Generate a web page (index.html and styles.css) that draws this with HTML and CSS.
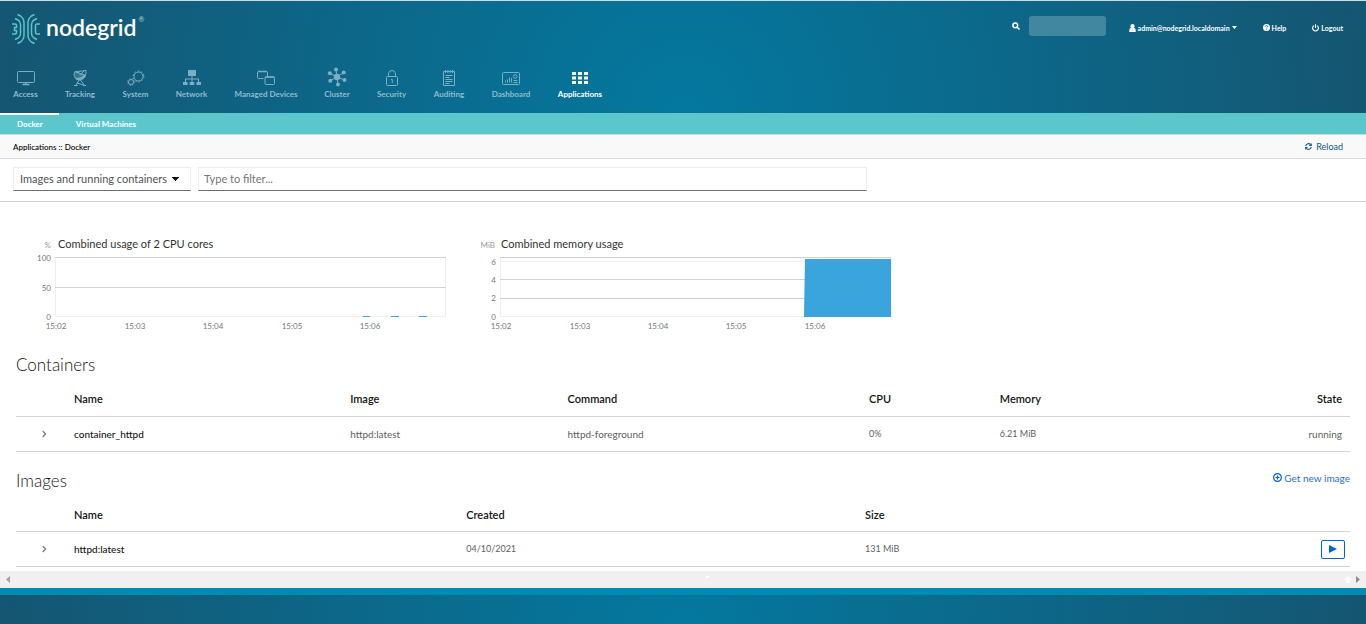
FILE: index.html
```html
<!DOCTYPE html>
<html lang="en">
<head>
<meta charset="utf-8">
<title>Nodegrid - Applications :: Docker</title>
<link rel="stylesheet" href="styles.css">
</head>
<body>
<header class="header">
  <div class="topbar">
    <a class="logo" href="#" aria-label="nodegrid">
      <svg class="logo-mark" width="28" height="32" viewBox="0 0 28 32" fill="none" stroke="#5bc5c9" stroke-width="1.500">
        <path d="M5.500 1.500 8.500 3Q12 5.500 12 10v12q0 4.500-3.500 7l-3 1.500M3 5.500 6 7q2.500 1.500 2.500 4.500v9q0 3-2.500 4.500l-3 1.500M0 11h3q1.500 0 1.500 1.500v2H2.500v3h2v2Q4.500 21 3 21H0"/>
        <path d="M22.500 1.500 19.500 3Q16 5.500 16 10v12q0 4.500 3.500 7l3 1.500M25 5.500 22 7q-2.500 1.500-2.500 4.500v9q0 3 2.500 4.500l3 1.500M28 11h-3q-1.500 0-1.500 1.500v7q0 1.500 1.500 1.500h3"/>
      </svg>
      <span class="logo-text">nodegrid</span><span class="logo-mark-r">®</span>
    </a>
    <div class="tools">
      <label class="search">
        <svg width="8" height="8" viewBox="0 0 8 8" fill="none" stroke="#fff" stroke-width="1.500" role="img" aria-label="Search"><circle cx="3.300" cy="3.300" r="2.400"/><path d="m5 5 2.500 2.500"/></svg>
        <input class="search-box" type="text">
      </label>
      <button class="tool user" type="button">
        <svg width="7" height="8" viewBox="0 0 7 8" fill="#fff"><circle cx="3.500" cy="2.200" r="2.100"/><path d="M.3 8V6q0-2 1.700-2h3q1.700 0 1.700 2v2z"/></svg>
        admin@nodegrid.localdomain
        <svg width="5" height="3" viewBox="0 0 5 3" fill="#fff"><path d="M0 0h5L2.500 3z"/></svg>
      </button>
      <a class="tool help" href="#">
        <svg width="7" height="7" viewBox="0 0 7 7"><circle cx="3.500" cy="3.500" r="3.500" fill="#fff"/><path d="M2.300 2.600q.2-1 1.200-1t1.200.9q0 .6-1.200 1.300M3.500 4.800v.9" fill="none" stroke="#11607f" stroke-width=".9"/></svg>
        Help
      </a>
      <a class="tool" href="#">
        <svg width="7" height="8" viewBox="0 0 7 8" fill="none" stroke="#fff" stroke-width="1.100"><path d="M2 1.600a2.900 2.900 0 1 0 3 0M3.500.3V4"/></svg>
        Logout
      </a>
    </div>
  </div>
  <nav class="mainnav">
    <a class="nav-item" href="#">
      <svg width="18" height="18" viewBox="0 0 18 18" fill="none" stroke="currentColor"><rect x=".5" y="2.500" width="17" height="11" rx="1"/><path d="M9 13.500v2M5.500 15.500h7" stroke-width="1.500"/></svg>
      Access</a>
    <a class="nav-item" href="#">
      <svg width="18" height="18" viewBox="0 0 18 18" fill="none" stroke="currentColor"><path d="M4 2.500C2 6 3.500 10.500 8 11q5 0 6.500-4.500z" fill="currentColor" fill-opacity=".35"/><path d="M4 2.500 14.500 6.500M4 2.500l9-.5M13 2 9 6.500M12.500 1.500h2.500q.5 3-1 5"/><path d="M5 9.500q5 1.500 9-3" stroke-width="2"/><path d="m8 11-3 5.500M9.500 11l4 5.500M6 14l6.500 2M3 16.500h3.500M12 16.500h3"/></svg>
      Tracking</a>
    <a class="nav-item" href="#">
      <svg width="18" height="18" viewBox="0 0 18 18" fill="none" stroke="currentColor"><circle cx="11.500" cy="7.500" r="4.500"/><circle cx="11.500" cy="7.500" r="5.400" stroke-dasharray="1.700 1.700"/><circle cx="4" cy="13" r="2.500"/><circle cx="4" cy="13" r="3.300" stroke-dasharray="1.300 1.300"/></svg>
      System</a>
    <a class="nav-item" href="#">
      <svg width="18" height="18" viewBox="0 0 18 18" fill="currentColor"><path d="M5 1h8v6H5zM8.500 7h1v3h-1zM2 9.500h14v1H2zM2 10h1v3H2zM8.500 10h1v3h-1zM15 10h1v3h-1zM0 13h4.500v3H0zM6.700 13h4.600v3H6.700zM13.500 13H18v3h-4.500z"/></svg>
      Network</a>
    <a class="nav-item" href="#">
      <svg width="18" height="18" viewBox="0 0 18 18" fill="none" stroke="currentColor"><path d="M6.500 9.500h-5l-1-.7V3.200l1-.7h8l1 .7v4.300"/><rect x="8" y="8" width="9.500" height="7.500" rx="1"/><path d="M1 2.500h9M8 8h9.500" stroke-width="1.300"/></svg>
      Managed Devices</a>
    <a class="nav-item" href="#">
      <svg width="20" height="20" viewBox="0 0 20 20" fill="currentColor" stroke="currentColor" stroke-width="1"><path d="M10 10 9 2.500M10 10l6.500-4.500M10 10l7.500 3M10 10l1 7.500M10 10l-6.500 3.500M10 10 3 6.500"/><g stroke="none"><circle cx="10" cy="10" r="3.200"/><circle cx="9" cy="2.500" r="2"/><circle cx="16.700" cy="5.500" r="2"/><circle cx="17.500" cy="13" r="2"/><circle cx="11" cy="17.500" r="2"/><circle cx="3.300" cy="13.700" r="2"/><circle cx="2.800" cy="6.300" r="2"/></g></svg>
      Cluster</a>
    <a class="nav-item" href="#">
      <svg width="18" height="18" viewBox="0 0 18 18" fill="none" stroke="currentColor"><rect x="3.500" y="7.500" width="11" height="9" rx="1"/><path d="M5.500 7.500V5q0-3.500 3.500-3.500T12.500 5v2.500M8 10.500h1.300V14"/></svg>
      Security</a>
    <a class="nav-item" href="#">
      <svg width="18" height="18" viewBox="0 0 18 18" fill="none" stroke="currentColor"><path d="M3.500 2.500h11v14h-11zM5.500 6.500h7M5.500 8.500h4M5.500 10.500h7M5.500 12.500h7M5.500 14.500h4M5.500 1v3M7.800 1v3M10.200 1v3M12.500 1v3"/></svg>
      Auditing</a>
    <a class="nav-item" href="#">
      <svg width="18" height="18" viewBox="0 0 18 18" fill="none" stroke="currentColor"><rect x=".5" y="3.500" width="17" height="12" rx="1"/><path d="M3.500 13.500v-2M5.500 13.500v-3M7.500 13.500v-5M9.500 13.500V9M11.500 13.500h4M11.500 11.500h4"/><circle cx="13.300" cy="7.500" r="1.800"/></svg>
      Dashboard</a>
    <a class="nav-item active" href="#" aria-current="page">
      <svg width="18" height="18" viewBox="0 0 18 18" fill="currentColor"><path d="M1 3h4v3H1zM7 3h4v3H7zM13 3h4v3h-4zM1 7.500h4v3H1zM7 7.500h4v3H7zM13 7.500h4v3h-4zM1 12h4v3H1zM7 12h4v3H7zM13 12h4v3h-4z"/></svg>
      Applications</a>
  </nav>
</header>

<nav class="subnav">
  <a class="subnav-item current" href="#">Docker</a>
  <a class="subnav-item" href="#">Virtual Machines</a>
</nav>

<div class="crumbs">
  <span class="path">Applications :: Docker</span>
  <a class="reload" href="#">
    <svg width="7" height="7" viewBox="0 0 8 8" fill="none" stroke="currentColor" stroke-width="1.200"><path d="M.8 3.500A3.200 3.200 0 0 1 6.500 2M7.200 4.500A3.200 3.200 0 0 1 1.500 6M7.200.5v2.300H5M.8 7.500V5.200H3"/></svg>
    Reload
  </a>
</div>

<main class="main">
  <form class="filters">
    <select class="filter-select" aria-label="Show">
      <option>Images and running containers</option>
      <option>Everything</option>
    </select>
    <input class="filter-text" type="text" placeholder="Type to filter..." aria-label="Filter">
  </form>

  <section class="charts">
    <svg class="chart" width="420" height="100" viewBox="0 0 420 100">
      <text class="unit" x="21" y="12" text-anchor="end">%</text>
      <text class="chart-title" x="28" y="12">Combined usage of 2 CPU cores</text>
      <rect class="frame" x="25.500" y="21.500" width="390" height="59"/>
      <path class="grid" d="M25 21.500h391M25 51.500h391"/>
      <path class="series-line" d="M333 80.500h7M361 80.500h8M389 80.500h8"/>
      <g text-anchor="end"><text x="21" y="25">100</text><text x="21" y="55">50</text><text x="21" y="84">0</text></g>
      <g text-anchor="middle"><text x="26" y="93">15:02</text><text x="105" y="93">15:03</text><text x="183" y="93">15:04</text><text x="262" y="93">15:05</text><text x="340" y="93">15:06</text></g>
    </svg>
    <svg class="chart" width="420" height="100" viewBox="0 0 420 100">
      <text class="unit" x="20" y="12" text-anchor="end">MiB</text>
      <text class="chart-title" x="26" y="12">Combined memory usage</text>
      <rect class="frame" x="25.500" y="21.500" width="390" height="59"/>
      <path class="frame" d="M25 25.500h391"/>
      <path class="grid" d="M25 21.500h391M25 43.500h391M25 62.500h391"/>
      <path class="series-area" d="M330 23h86v58h-87z"/>
      <g text-anchor="end"><text x="21" y="29">6</text><text x="21" y="47">4</text><text x="21" y="65">2</text><text x="21" y="84">0</text></g>
      <g text-anchor="middle"><text x="26" y="93">15:02</text><text x="105" y="93">15:03</text><text x="183" y="93">15:04</text><text x="261" y="93">15:05</text><text x="340" y="93">15:06</text></g>
    </svg>
  </section>

  <section class="listing">
    <div class="listing-head"><h2>Containers</h2></div>
    <table class="table">
      <colgroup><col class="c-toggle"><col class="c-name"><col class="c-image"><col class="c-command"><col class="c-cpu"><col></colgroup>
      <thead>
        <tr><td></td><th>Name</th><th>Image</th><th>Command</th><th>CPU</th><th>Memory</th><th class="end">State</th></tr>
      </thead>
      <tbody>
        <tr>
          <td class="toggle"><button class="expand" type="button" aria-label="Expand"><svg width="5" height="8" viewBox="0 0 5 8" fill="none" stroke="#777" stroke-width="1.200"><path d="m.7 1 3 3-3 3"/></svg></button></td>
          <th>container_httpd</th><td>httpd:latest</td><td>httpd-foreground</td><td class="num">0%</td><td class="num">6.21 MiB</td><td class="end">running</td>
        </tr>
      </tbody>
    </table>
  </section>

  <section class="listing">
    <div class="listing-head"><h2>Images</h2>
      <a class="get-image" href="#"><svg width="9" height="9" viewBox="0 0 9 9" fill="none" stroke="#06c" stroke-width="1.200"><circle cx="4.500" cy="4.500" r="3.900"/><path d="M4.500 2.500v4M2.500 4.500h4"/></svg>Get new image</a>
    </div>
    <table class="table">
      <colgroup><col class="c-toggle"><col class="c-imgname"><col class="c-created"><col></colgroup>
      <thead>
        <tr><td></td><th>Name</th><th>Created</th><th>Size</th><td></td></tr>
      </thead>
      <tbody>
        <tr>
          <td class="toggle"><button class="expand" type="button" aria-label="Expand"><svg width="5" height="8" viewBox="0 0 5 8" fill="none" stroke="#777" stroke-width="1.200"><path d="m.7 1 3 3-3 3"/></svg></button></td>
          <th>httpd:latest</th><td class="num">04/10/2021</td><td class="num">131 MiB</td>
          <td class="run-cell"><button class="run" type="button" aria-label="Run image"><svg width="8" height="8" viewBox="0 0 8 8" fill="#06c"><path d="M0 0 8 4 0 8z"/></svg></button></td>
        </tr>
      </tbody>
    </table>
  </section>
</main>

<div class="scrollbar">
  <svg width="4" height="7" viewBox="0 0 4 7" fill="#a3a3a3"><path d="M4 0v7L0 3.500z"/></svg>
  <span class="grip"></span>
  <span class="scroll-end">
    <svg width="8" height="8" viewBox="0 0 8 8" fill="#fff"><path d="m4 0 4 4H5.500v3h-3V4H0z"/></svg>
    <svg width="4" height="7" viewBox="0 0 4 7" fill="#8c8c8c"><path d="M0 0v7l4-3.500z"/></svg>
  </span>
</div>
<footer class="footer"></footer>
</body>
</html>
```

FILE: styles.css
```css
* { box-sizing: border-box; }

body {
  margin: 0;
  min-height: 100vh;
  display: flex;
  flex-direction: column;
  background: #fff;
  color: #151515;
  font: 9px/12px Lato, "Open Sans", sans-serif;
}

a { color: inherit; text-decoration: none; }
button { font: inherit; color: inherit; background: none; border: 0; padding: 0; cursor: pointer; }
svg { flex: none; }

/* Header */
.header {
  height: 113px;
  border-top: 1px solid #cfdcdf;
  background: radial-gradient(circle at 50% 100%, #04789f 0, #155672 683px);
  color: #fff;
}
.topbar {
  display: flex;
  justify-content: space-between;
  align-items: flex-start;
  height: 67px;
  padding: 12px 23px 0 12px;
}
.logo { display: flex; align-items: flex-start; }
.logo-text { margin-left: 6px; font-size: 23px; line-height: 28px; font-weight: 600; }
.logo-mark-r { margin-left: 2px; font-size: 7px; line-height: 12px; opacity: .7; }
.tools { display: flex; align-items: center; gap: 26px; padding-top: 3px; font-size: 7px; font-weight: 700; }
.search { display: flex; align-items: center; gap: 9px; margin-right: -3px; }
.search-box {
  width: 77px;
  height: 20px;
  border: 0;
  border-radius: 3px;
  background: #4287a0;
  color: #fff;
}
.tool { display: flex; align-items: center; gap: 2px; padding-top: 3px; }

.mainnav {
  display: grid;
  grid-template-columns: 51px 58px 53px 59px 90px 52px 57px 58px 66px 72px;
}
.nav-item {
  display: flex;
  flex-direction: column;
  align-items: center;
  justify-content: flex-end;
  height: 32px;
  color: #8fbccd;
  font-size: 8px;
  font-weight: 700;
  white-space: nowrap;
}
.nav-item svg { margin-bottom: 1px; opacity: .85; }
.nav-item.active { color: #fff; }
.nav-item.active svg { opacity: 1; }

.subnav {
  display: flex;
  height: 22px;
  background: #5bc6cc;
  border-bottom: 1px solid #d0d8d8;
  color: #fff;
  font-size: 8px;
  font-weight: 700;
}
.subnav-item { padding: 3px 16px 3px 17px; border-top: 2px solid transparent; }
.subnav-item.current { border-top-color: #fff; }

.crumbs {
  display: flex;
  justify-content: space-between;
  align-items: center;
  height: 24px;
  padding: 0 23px 0 13px;
  background: #f9f9f9;
  border-bottom: 1px solid #ddd;
  color: #000;
}
.path { font-size: 8px; font-weight: 500; }
.reload { display: flex; align-items: center; gap: 4px; color: #0b5c86; }

/* Content */
.main { flex: 1; }
.filters {
  display: flex;
  gap: 7px;
  padding: 8px 13px 10px;
  border-bottom: 1px solid #d2d2d2;
}
.filter-select, .filter-text {
  height: 24px;
  border: 1px solid #ededed;
  border-bottom-color: #6a6e73;
  border-radius: 0;
  padding: 0 6px;
  color: #4f5255;
  font: inherit;
  font-size: 11px;
}
.filter-select {
  appearance: none;
  width: 178px;
  background:
    linear-gradient(to bottom right, #151515 50%, transparent 50%) right 10px center / 4px 4px no-repeat,
    linear-gradient(to bottom left, #151515 50%, transparent 50%) right 14px center / 4px 4px no-repeat;
}
.filter-text { width: 669px; padding: 0 5px 2px; }
.filter-text::placeholder { color: #757575; opacity: 1; }

.charts { display: flex; flex-wrap: wrap; gap: 25px; padding: 34px 30px 12px; }
.chart text { fill: #777; font-size: 8px; }
.chart .chart-title { fill: #333; font-size: 11px; }
.chart .unit { fill: #999; }
.frame { fill: none; stroke: #eee; }
.grid { stroke: #d2d2d2; }
.series-line { stroke: #39a5dc; }
.series-area { fill: #39a5dc; }

.listing { padding: 0 16px; }
.listing + .listing { margin-top: 12px; }
.listing-head { display: flex; justify-content: space-between; align-items: flex-start; height: 35px; padding-top: 5px; }
.listing-head h2 { margin: 0; font-size: 17px; line-height: 24px; font-weight: 300; }
.get-image { display: flex; align-items: center; gap: 2px; padding-top: 3px; color: #2b6fce; font-size: 10px; }

.table { width: 100%; table-layout: fixed; border-collapse: collapse; font-size: 10px; }
.table tr { height: 35px; border-bottom: 1px solid #d2d2d2; }
.table thead tr { height: 33px; }
.table th, .table td { padding: 0 8px; text-align: left; font-weight: 400; color: #5c5f62; }
.table thead th { font-size: 11px; font-weight: 600; color: #151515; }
.table tbody th { font-weight: 500; color: #151515; }
.table .num { font-size: 9px; }
.table .end { text-align: right; }
.table .toggle { text-align: right; padding-right: 19px; }
.c-toggle { width: 50px; }
.c-name { width: 20.7%; }
.c-image { width: 16.3%; }
.c-command { width: 22.6%; }
.c-cpu { width: 9.8%; }
.c-imgname { width: 29.4%; }
.c-created { width: 29.9%; }
.table .run-cell { text-align: right; padding: 0 5px; }
.run { width: 24px; height: 19px; border: 1px solid #06c; border-radius: 2px; vertical-align: middle; }

.scrollbar {
  display: flex;
  justify-content: space-between;
  align-items: center;
  height: 17px;
  padding: 0 6px;
  background: #f0f0f0;
}
.grip { width: 3px; height: 2px; margin: 0 0 6px 60px; background: #fff; }
.scroll-end { display: flex; align-items: center; gap: 4px; }
.footer {
  height: 36px;
  border-top: 7px solid #008cb0;
  background: radial-gradient(circle at 50% 100%, #04789f 0, #155672 683px);
}
```
